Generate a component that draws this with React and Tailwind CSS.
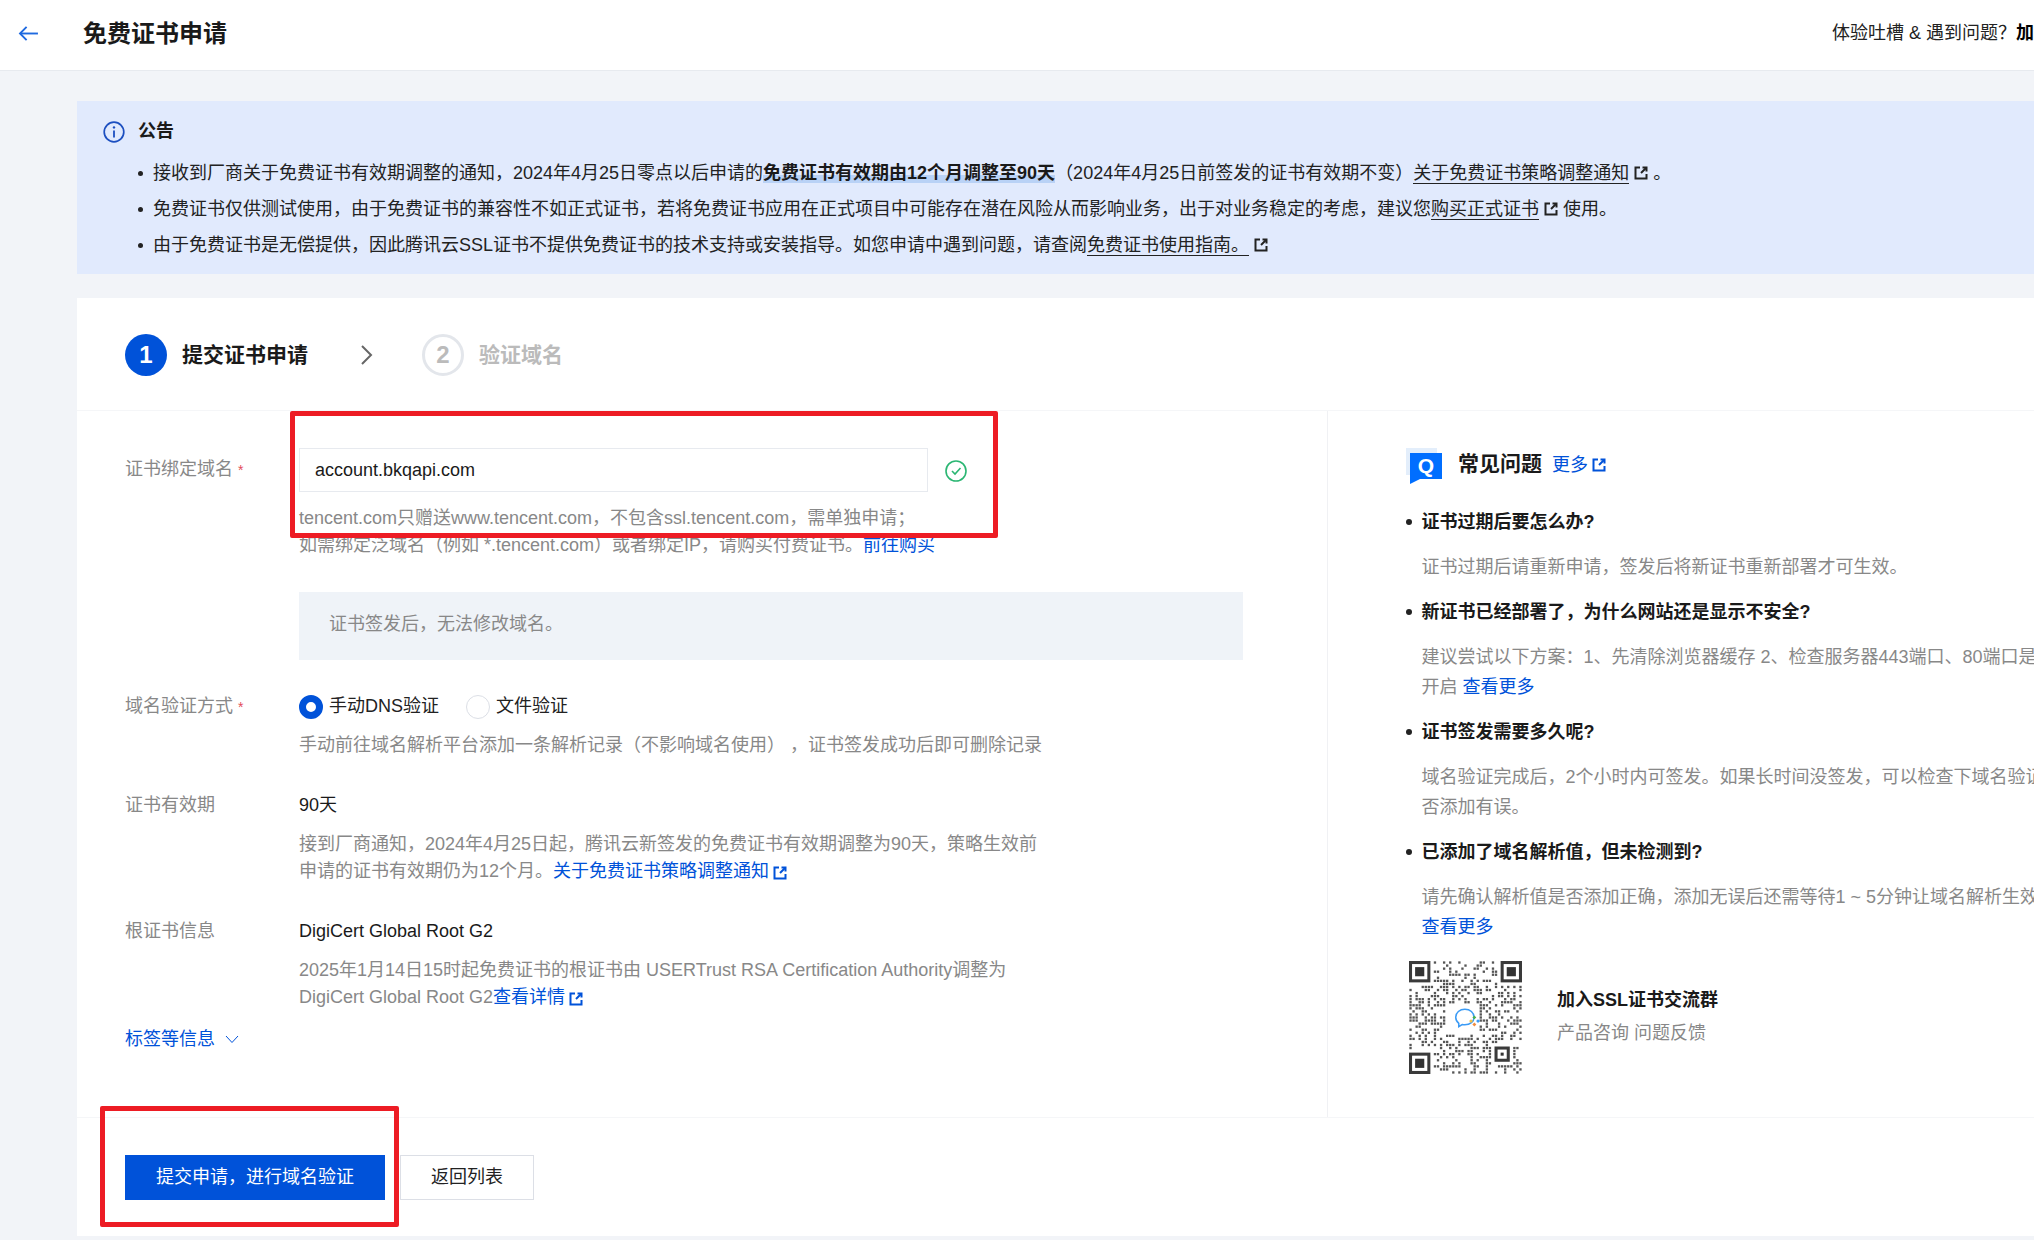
import { useMemo } from "react";

function ExtLink({ className = "" }) {
  return (
    <svg viewBox="0 0 14 14" fill="none" stroke="currentColor" strokeWidth="2" className={`inline-block w-[14px] h-[14px] ${className}`}>
      <path d="M6 1.5H1.5v11h11V8" />
      <path d="M8.5 1.5h4v4" />
      <path d="M12 2L7 7" />
    </svg>
  );
}

function QrCode() {
  // fake modules, seeded so the picture stays the same between runs
  const cells = useMemo(() => {
    const out = [];
    let s = 20240425;
    const next = () => {
      s = (s * 1664525 + 1013904223) >>> 0;
      return (s >>> 16) & 255;
    };
    for (let y = 0; y < 37; y++) {
      for (let x = 0; x < 37; x++) {
        const r = next();
        if (x < 8 && y < 8) continue;
        if (x > 28 && y < 8) continue;
        if (x < 8 && y > 28) continue;
        if (x > 26 && x < 34 && y > 26 && y < 34) continue;
        if (x > 11 && x < 23 && y > 13 && y < 24) continue;
        if (r < 112) out.push([x, y]);
      }
    }
    return out;
  }, []);
  const finder = (x, y) => (
    <g key={`${x}-${y}`}>
      <rect x={x + 0.5} y={y + 0.5} width="6" height="6" fill="none" stroke="#3a3a3a" strokeWidth="1" />
      <rect x={x + 2} y={y + 2} width="3" height="3" fill="#333" />
    </g>
  );
  return (
    <svg viewBox="0 0 37 37" className="w-[113px] h-[113px] shrink-0">
      {cells.map(([x, y]) => (
        <rect key={`${x}:${y}`} x={x + 0.12} y={y + 0.12} width="0.76" height="0.76" fill="#555" />
      ))}
      {finder(0, 0)}
      {finder(30, 0)}
      {finder(0, 30)}
      <rect x="28.5" y="28.5" width="4" height="4" fill="none" stroke="#3a3a3a" strokeWidth="1" />
      <rect x="30" y="30" width="1" height="1" fill="#333" />
      <path d="M15.3 18.4c0-1.5 1.3-2.6 3-2.6s3 1.1 3 2.6c0 1.4-1.3 2.5-3 2.5-.3 0-.6 0-.9-.1l-1.1.7v-1.1c-.6-.5-1-1.2-1-2z" fill="none" stroke="#3b9bf5" strokeWidth="0.5" />
      <rect x="21" y="18" width="0.9" height="0.9" fill="#4bb050" transform="rotate(45 21.4 18.4)" />
      <rect x="22.2" y="19.2" width="0.9" height="0.9" fill="#3b9bf5" transform="rotate(45 22.6 19.6)" />
      <rect x="21" y="20.3" width="0.9" height="0.9" fill="#f08a3c" transform="rotate(45 21.4 20.7)" />
      <rect x="19.9" y="19.2" width="0.9" height="0.9" fill="#f5c242" transform="rotate(45 20.3 19.6)" />
    </svg>
  );
}

function FormRow({ label, required, children, className = "", labelClass = "" }) {
  return (
    <div className={`flex ${className}`}>
      <div className={`w-[174px] shrink-0 text-[#888] leading-[27px] ${labelClass}`}>
        {label}
        {required && <span className="text-[#e34d59] ml-[5px] text-[14px]">*</span>}
      </div>
      <div className="flex-1">{children}</div>
    </div>
  );
}

function Faq({ q, children }) {
  return (
    <>
      <div className="flex items-center font-bold text-[#1a1a1a] leading-[27px] whitespace-nowrap">
        <span className="w-[6px] h-[6px] rounded-full bg-[#222] mr-[9.5px]"></span>
        {q}
      </div>
      <div className="pl-[15.5px] text-[#888] leading-[30px] whitespace-nowrap">{children}</div>
    </>
  );
}

export default function App() {
  return (
    <div className="relative w-full h-[1240px] overflow-hidden bg-[#f2f4f8] text-[18px] text-[#222] font-['Liberation_Sans','Noto_Sans_CJK_SC',sans-serif]">
      {/* HEADER */}
      <div className="flex items-center h-[71px] bg-white border-b border-[#e7eaef] pl-[18px] pb-[3px] whitespace-nowrap">
        <svg viewBox="0 0 22 18" fill="none" stroke="#1f6ae0" strokeWidth="2" className="w-[21px] h-[17px] shrink-0 -mt-[1px]">
          <path d="M21 9H2" />
          <path d="M9 2L2 9l7 7" />
        </svg>
        <span className="w-[1749px] shrink-0 ml-[44px] text-[24px] font-bold text-[#1a1a1a]">免费证书申请</span>
        <span className="shrink-0 text-[#222]">体验吐槽 &amp; 遇到问题？<b className="text-black">加入交流群</b></span>
      </div>

      <div className="pl-[77px] pt-[30px]">
        {/* NOTICE */}
        <div className="bg-[#e1eafd] pl-[26px] pt-[17px] pb-[11px] whitespace-nowrap">
          <div className="flex items-center h-[27px] font-bold text-[#1a1a1a]">
            <svg viewBox="0 0 22 22" fill="none" className="w-[22px] h-[22px] mr-[13px]">
              <circle cx="11" cy="11" r="9.8" stroke="#1c4fc0" strokeWidth="1.7" />
              <circle cx="11" cy="6.4" r="1.2" fill="#1c4fc0" />
              <path d="M11 9.5v7" stroke="#1c4fc0" strokeWidth="1.8" />
            </svg>
            公告
          </div>
          <div className="mt-[10px] pl-[35px] leading-[36px]">
            <div className="flex items-center h-[36px]">
              <span className="w-[5px] h-[5px] rounded-full bg-[#222] mr-[10px]"></span>
              接收到厂商关于免费证书有效期调整的通知，2024年4月25日零点以后申请的
              <b className="inline-block leading-[20px] text-[#1a1a1a] bg-[linear-gradient(transparent_60%,#b9d2f6_60%)]">免费证书有效期由12个月调整至90天</b>
              （2024年4月25日前签发的证书有效期不变）
              <span className="inline-block leading-[20px] border-b border-[#222]">关于免费证书策略调整通知</span>
              <ExtLink className="ml-[5px]" />
              <span className="ml-[5px]">。</span>
            </div>
            <div className="flex items-center h-[36px]">
              <span className="w-[5px] h-[5px] rounded-full bg-[#222] mr-[10px]"></span>
              免费证书仅供测试使用，由于免费证书的兼容性不如正式证书，若将免费证书应用在正式项目中可能存在潜在风险从而影响业务，出于对业务稳定的考虑，建议您
              <span className="inline-block leading-[20px] border-b border-[#222]">购买正式证书</span>
              <ExtLink className="ml-[5px] mr-[5px]" />
              使用。
            </div>
            <div className="flex items-center h-[36px]">
              <span className="w-[5px] h-[5px] rounded-full bg-[#222] mr-[10px]"></span>
              由于免费证书是无偿提供，因此腾讯云SSL证书不提供免费证书的技术支持或安装指导。如您申请中遇到问题，请查阅
              <span className="inline-block leading-[20px] border-b border-[#222]">免费证书使用指南。</span>
              <ExtLink className="ml-[5px]" />
            </div>
          </div>
        </div>

        {/* CARD */}
        <div className="mt-[24px] bg-white whitespace-nowrap">
          {/* STEPS */}
          <div className="flex items-center h-[113px] pl-[48px] pt-[2px] border-b border-[#f5f6f8]">
            <span className="flex items-center justify-center w-[42px] h-[42px] rounded-full bg-[#0052d9] text-white text-[24px] font-bold">1</span>
            <span className="ml-[15px] text-[21px] font-bold text-[#1a1a1a]">提交证书申请</span>
            <svg viewBox="0 0 13 20" fill="none" stroke="#666" strokeWidth="2" className="w-[13px] h-[20px] ml-[52px]">
              <path d="M2 1l9 9-9 9" />
            </svg>
            <span className="flex items-center justify-center w-[42px] h-[42px] ml-[49px] rounded-full border-[3px] border-[#e3e6eb] text-[#bbb] text-[24px] font-bold">2</span>
            <span className="ml-[15px] text-[21px] font-bold text-[#bbb]">验证域名</span>
          </div>

          <div className="flex">
            {/* FORM */}
            <div className="w-[1251px] shrink-0 h-[706px] pl-[48px] pt-[37px] border-r border-[#f0f1f4]">
              <FormRow label="证书绑定域名" required labelClass="mt-[8px]">
                <div className="flex items-center">
                  <div className="flex items-center w-[629px] h-[44px] pl-[15px] border border-[#e7eaef] text-[#1a1a1a]">account.bkqapi.com</div>
                  <svg viewBox="0 0 22 22" fill="none" stroke="#2bb673" strokeWidth="1.6" className="w-[22px] h-[22px] ml-[17px] mt-[2px]">
                    <circle cx="11" cy="11" r="10" />
                    <path d="M7 11l3 3 5.5-6" />
                  </svg>
                </div>
                <div className="mt-[13px] text-[#888] leading-[27px]">
                  <div>tencent.com只赠送www.tencent.com，不包含ssl.tencent.com，需单独申请；</div>
                  <div>如需绑定泛域名（例如 *.tencent.com）或者绑定IP，请购买付费证书。<span className="text-[#0052d9]">前往购买</span></div>
                </div>
                <div className="flex items-center w-[944px] h-[68px] mt-[33px] pl-[30px] pb-[4px] bg-[#eff3f8] text-[#888]">证书签发后，无法修改域名。</div>
              </FormRow>

              <FormRow label="域名验证方式" required className="mt-[33px]">
                <div className="flex items-center h-[27px]">
                  <span className="w-[24px] h-[24px] rounded-full border-[7px] border-[#0052d9] bg-white"></span>
                  <span className="ml-[6px] text-[#222]">手动DNS验证</span>
                  <span className="w-[24px] h-[24px] ml-[27px] rounded-full border border-[#dcdfe6] bg-white"></span>
                  <span className="ml-[6px] text-[#222]">文件验证</span>
                </div>
                <div className="mt-[12px] text-[#888] leading-[27px]">手动前往域名解析平台添加一条解析记录（不影响域名使用）&nbsp;，证书签发成功后即可删除记录</div>
              </FormRow>

              <FormRow label="证书有效期" className="mt-[33px]">
                <div className="leading-[27px] text-[#1a1a1a]">90天</div>
                <div className="mt-[12px] text-[#888] leading-[27px]">
                  <div>接到厂商通知，2024年4月25日起，腾讯云新签发的免费证书有效期调整为90天，策略生效前</div>
                  <div>申请的证书有效期仍为12个月。<span className="text-[#0052d9]">关于免费证书策略调整通知<ExtLink className="ml-[4px] relative top-[1px]" /></span></div>
                </div>
              </FormRow>

              <FormRow label="根证书信息" className="mt-[33px]">
                <div className="leading-[27px] text-[#1a1a1a]">DigiCert Global Root G2</div>
                <div className="mt-[12px] text-[#888] leading-[27px]">
                  <div>2025年1月14日15时起免费证书的根证书由 USERTrust RSA Certification Authority调整为</div>
                  <div>DigiCert Global Root G2<span className="text-[#0052d9]">查看详情<ExtLink className="ml-[4px] relative top-[1px]" /></span></div>
                </div>
              </FormRow>

              <div className="flex items-center h-[27px] mt-[15px] text-[#0052d9]">
                标签等信息
                <svg viewBox="0 0 14 9" fill="none" stroke="currentColor" strokeWidth="1" className="w-[14px] h-[9px] ml-[10px]">
                  <path d="M1 1l6 6.5L13 1" />
                </svg>
              </div>
            </div>

            {/* FAQ */}
            <div className="pl-[78px] pt-[36px] flex-1">
              <div className="flex items-center h-[34px]">
                <div className="relative w-[36px] h-[36px] mt-[3px] shrink-0">
                  <div className="w-[31px] h-[27px] bg-[#e3eefb]"></div>
                  <svg viewBox="0 0 36 36" className="absolute inset-0 w-[36px] h-[36px]">
                    <path d="M4 5h32v26H14L4 36z" fill="#006eff" />
                  </svg>
                  <span className="absolute left-[4px] top-[5px] w-[32px] h-[26px] flex items-center justify-center text-white text-[21px] leading-none font-bold">Q</span>
                </div>
                <span className="ml-[16px] text-[21px] font-bold text-[#1a1a1a]">常见问题</span>
                <span className="ml-[10px] mt-[2px] text-[#0052d9]">更多</span>
                <ExtLink className="ml-[4px] mt-[2px] text-[#0052d9]" />
              </div>

              <div className="flex flex-col gap-[16.5px] mt-[27.5px]">
                <Faq q="证书过期后要怎么办?">证书过期后请重新申请，签发后将新证书重新部署才可生效。</Faq>
                <Faq q="新证书已经部署了，为什么网站还是显示不安全?">
                  <div>建议尝试以下方案：1、先清除浏览器缓存 2、检查服务器443端口、80端口是否</div>
                  <div>开启 <span className="text-[#0052d9]">查看更多</span></div>
                </Faq>
                <Faq q="证书签发需要多久呢?">
                  <div>域名验证完成后，2个小时内可签发。如果长时间没签发，可以检查下域名验证是</div>
                  <div>否添加有误。</div>
                </Faq>
                <Faq q="已添加了域名解析值，但未检测到?">
                  <div>请先确认解析值是否添加正确，添加无误后还需等待1 ~ 5分钟让域名解析生效</div>
                  <div className="text-[#0052d9]">查看更多</div>
                </Faq>
              </div>

              <div className="flex items-center mt-[19px] ml-[3px]">
                <QrCode />
                <div className="ml-[35px] mb-[1px]">
                  <div className="font-bold text-[#1a1a1a] leading-[27px]">加入SSL证书交流群</div>
                  <div className="mt-[6px] text-[#888] leading-[27px]">产品咨询 问题反馈</div>
                </div>
              </div>
            </div>
          </div>

          {/* FOOTER */}
          <div className="flex pl-[48px] pt-[37px] pb-[36px] border-t border-[#f5f6f8]">
            <button className="w-[260px] h-[45px] bg-[#0052d9] text-white">提交申请，进行域名验证</button>
            <button className="w-[134px] h-[45px] ml-[15px] bg-white border border-[#dcdfe6] text-[#222]">返回列表</button>
          </div>
        </div>
      </div>

      {/* red annotation boxes drawn over the page */}
      <div className="absolute left-[290px] top-[411px] w-[708px] h-[127px] border-[5px] border-[#ed1c24] rounded-[2px]"></div>
      <div className="absolute left-[100px] top-[1106px] w-[299px] h-[121px] border-[5px] border-[#ed1c24] rounded-[2px]"></div>
    </div>
  );
}
